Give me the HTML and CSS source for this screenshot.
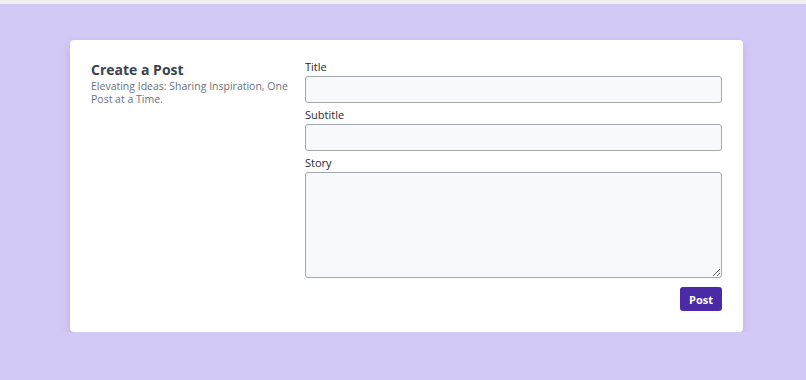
FILE: index.html
```html
<!DOCTYPE html>
<html lang="en">

<head>
  <meta charset="UTF-8">
  <meta name="viewport" content="width=device-width, initial-scale=1.0">
  <title>Create a Post</title>
  <link rel="stylesheet" href="styles.css">
</head>

<body>
  <div class="topbar"></div>
  <div class="page">
    <form class="card">
      <div class="intro">
        <h2>Create a Post</h2>
        <p>Elevating Ideas: Sharing Inspiration, One Post at a Time.</p>
      </div>
      <div class="fields">
        <label for="title">Title</label>
        <input id="title" type="text">
        <label for="subtitle">Subtitle</label>
        <input id="subtitle" type="text">
        <label for="story">Story</label>
        <textarea id="story"></textarea>
        <div class="actions">
          <button type="button">Post</button>
        </div>
      </div>
    </form>
  </div>
</body>

</html>
```

FILE: styles.css
```css
body {
  margin: 0;
  background: #d3c9f5;
  font-family: "Open Sans", "Liberation Sans", sans-serif;
  color: #374151;
}

.topbar {
  height: 4px;
  background: #efefef;
}

.page {
  padding: 36px 63px 0 70px;
}

.card {
  display: grid;
  grid-template-columns: 214px 1fr;
  background: #fff;
  border-radius: 4px;
  padding: 20px 21px 21px 21px;
  box-shadow: 0 4px 10px rgba(60, 40, 120, 0.15);
}

.intro h2 {
  margin: 1px 0 0;
  font-size: 14px;
  font-weight: 700;
  color: #3a4250;
  line-height: 18px;
}

.intro p {
  margin: 1px 0 0;
  font-size: 10.5px;
  line-height: 13px;
  color: #6b7280;
  width: 200px;
}

.fields {
  display: flex;
  flex-direction: column;
}

.fields label {
  font-size: 11px;
  line-height: 14px;
  color: #1f2937;
  margin-bottom: 2px;
}

.fields input,
.fields textarea {
  box-sizing: border-box;
  width: 100%;
  background: #f8f9fb;
  border: 1px solid #a3a7ae;
  border-radius: 3px;
  font-family: inherit;
  margin: 0 0 5px;
}

.fields input {
  height: 27px;
}

.fields textarea {
  display: block;
  height: 106px;
}

.actions {
  display: flex;
  justify-content: flex-end;
  margin-top: 4px;
}

.actions button {
  width: 42px;
  height: 24px;
  background: #4b2aa8;
  color: #fff;
  border: none;
  border-radius: 3px;
  font-family: inherit;
  font-weight: 700;
  font-size: 11px;
}
```
